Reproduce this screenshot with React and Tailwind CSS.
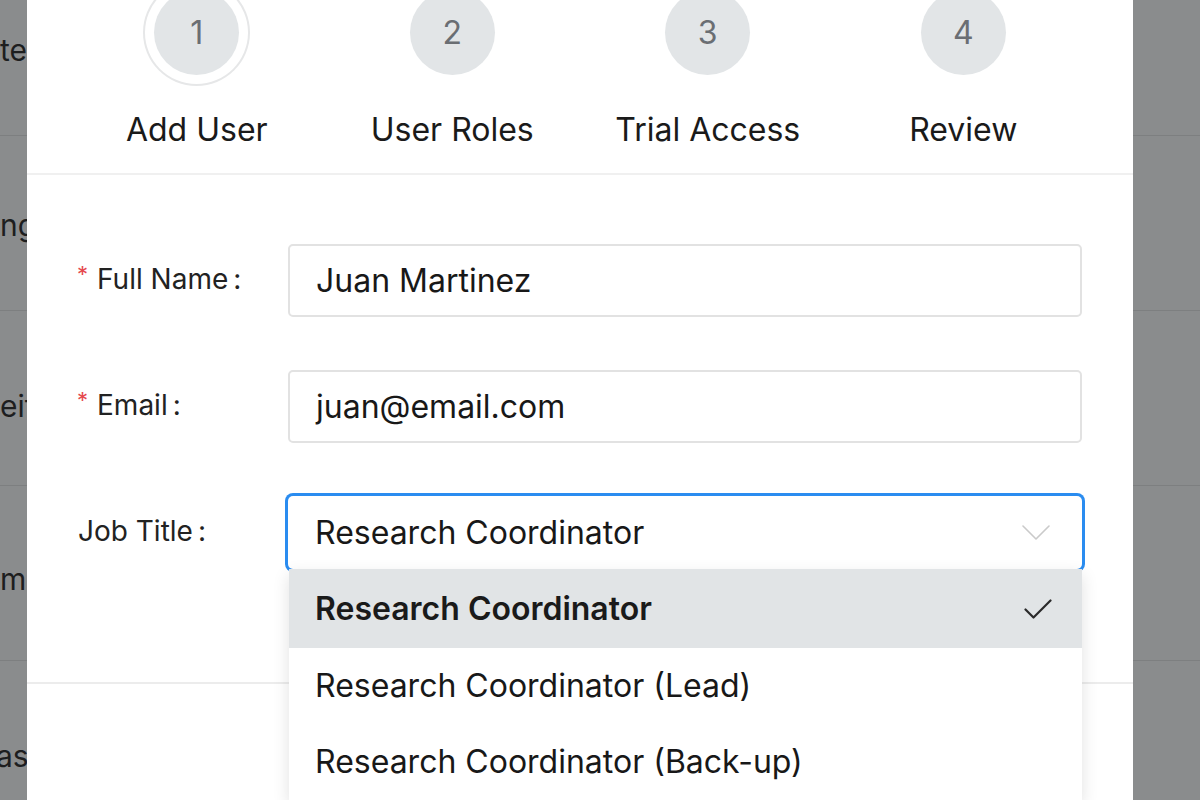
import { useState } from 'react';

const steps = [
  { n: 1, label: 'Add User', active: true },
  { n: 2, label: 'User Roles' },
  { n: 3, label: 'Trial Access' },
  { n: 4, label: 'Review' },
];

// what is left visible of the page behind the modal
const backRows = [
  { text: 'te', cls: 'pt-[4px]' },
  { text: 'ng', cls: 'pt-[4px]' },
  { text: 'eif', cls: 'pt-[16px]' },
  { text: 'm', cls: 'pt-[12px]' },
  { text: 'as', cls: 'pt-[16px] -ml-[4px]' },
];

const jobTitles = [
  'Research Coordinator',
  'Research Coordinator (Lead)',
  'Research Coordinator (Back-up)',
];

function Chevron() {
  return (
    <svg width="28" height="16" viewBox="0 0 28 16" fill="none">
      <polyline points="1,1 14,14 27,1" stroke="#cacaca" strokeWidth="1.6" strokeLinecap="round" strokeLinejoin="round" />
    </svg>
  );
}

function Check() {
  return (
    <svg width="28" height="20" viewBox="0 0 28 20" fill="none">
      <polyline points="1.5,10.5 9.5,18.5 26.5,1.5" stroke="#2a2a2a" strokeWidth="2.2" strokeLinecap="round" strokeLinejoin="round" />
    </svg>
  );
}

function Step({ n, label, active }) {
  return (
    <div className="flex flex-col items-center">
      <div
        className={
          active
            ? 'w-[85px] h-[85px] rounded-full bg-[#e2e5e7] flex items-center justify-center text-[32px] text-[#6a6e73] ring-2 ring-[#e6e7e8] ring-offset-[9px] ring-offset-white'
            : 'w-[85px] h-[85px] rounded-full bg-[#e2e5e7] flex items-center justify-center text-[32px] text-[#6a6e73]'
        }
      >
        {n}
      </div>
      <div className="mt-[35px] text-[32px] leading-[40px] text-[#1a1a1a] whitespace-nowrap">{label}</div>
    </div>
  );
}

function FieldLabel({ children, required }) {
  return (
    <div className="w-[210px] -mt-[4px] flex items-center text-[28px] text-[#222] whitespace-nowrap">
      {required && <span className="text-[#e5484d] text-[22px] -ml-[1px] mr-[9px] -mt-[8px]">*</span>}
      <span>{children}</span>
      <span className="ml-[5px]">:</span>
    </div>
  );
}

function TextField({ value }) {
  return (
    <div className="flex-1 h-[73px] border-2 border-[#e2e2e2] rounded-[5px] px-[26px] flex items-center text-[32px] text-[#181818]">
      {value}
    </div>
  );
}

export default function App() {
  const [selected] = useState(jobTitles[0]);

  return (
    <div
      className="relative w-[1200px] h-[800px] overflow-hidden bg-[#8a8c8d]"
      style={{ fontFamily: 'Inter, "Liberation Sans", Arial, sans-serif' }}
    >
      {/* page behind the overlay */}
      <div className="flex flex-col -mt-[39px]">
        {backRows.map((row) => (
          <div key={row.text} className="h-[175px] border-b border-[#7d7f80] flex items-center">
            <span className={`text-[30px] text-[#1d1e1f] whitespace-nowrap ${row.cls}`}>{row.text}</span>
          </div>
        ))}
      </div>

      {/* modal */}
      <div className="absolute left-[27px] top-[-60px] w-[1106px] h-[900px] bg-white">
        <div className="grid grid-cols-4 px-[42px] pt-[50px] pb-[23px] border-b-2 border-[#f0f0f0]">
          {steps.map((s) => (
            <Step key={s.n} {...s} />
          ))}
        </div>

        <div className="px-[51px] pt-[69px] flex flex-col gap-[53px]">
          <div className="flex items-center">
            <FieldLabel required>Full Name</FieldLabel>
            <TextField value="Juan Martinez" />
          </div>
          <div className="flex items-center">
            <FieldLabel required>Email</FieldLabel>
            <TextField value="juan@email.com" />
          </div>
          <div className="flex items-center">
            <FieldLabel>Job Title</FieldLabel>
            <div className="relative flex-1 h-[73px] rounded-[5px] ring-[3px] ring-[#2a8cf0] bg-white pl-[27px] pr-[32px] flex items-center justify-between text-[32px] text-[#181818]">
              <span>{selected}</span>
              <Chevron />

              <div className="absolute top-full left-[1px] right-0 z-10 bg-white shadow-[0_6px_16px_rgba(0,0,0,0.12)]">
                {jobTitles.map((t, i) => (
                  <div
                    key={t}
                    className={
                      i === 0
                        ? 'h-[79px] bg-[#e1e4e6] pl-[26px] pr-[30px] flex items-center justify-between font-semibold text-[#1a1a1a]'
                        : 'h-[76px] pl-[26px] pr-[30px] flex items-center text-[#181818]'
                    }
                  >
                    <span>{t}</span>
                    {t === selected && <Check />}
                  </div>
                ))}
              </div>
            </div>
          </div>
        </div>

        <div className="mt-[113px] border-t-2 border-[#ececec]" />
      </div>
    </div>
  );
}
